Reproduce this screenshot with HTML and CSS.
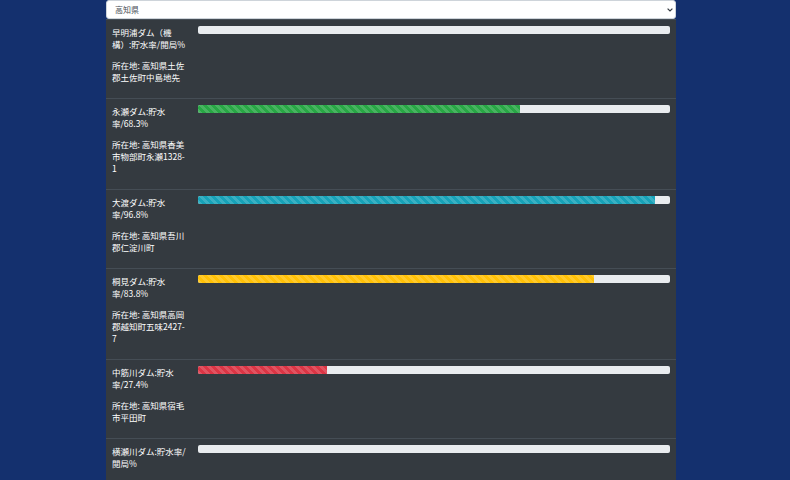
FILE: index.html
```html
<!DOCTYPE html>
<html lang="ja">
<head>
    <meta charset="UTF-8">
    <meta name="viewport" content="width=device-width, initial-scale=1.0">
    <title>高知県 ダム貯水率</title>
    <link rel="stylesheet" href="styles.css">
</head>
<body>
    <div class="container">
        <div class="select-wrap">
            <select class="pref-select">
                <option>高知県</option>
            </select>
            <svg class="select-arrow" width="6" height="4" viewBox="0 0 6 4">
                <path d="M0.6 0.6 L3 3 L5.4 0.6" fill="none" stroke="#343a40" stroke-width="1.2"/>
            </svg>
        </div>

        <table class="dam-table">
            <tbody>
                <tr>
                    <td class="dam-name">
                        <p>早明浦ダム（機構）:貯水率/閲局%</p>
                        <p>所在地: 高知県土佐郡土佐町中島地先</p>
                    </td>
                    <td class="dam-bar">
                        <div class="progress"></div>
                    </td>
                </tr>
                <tr>
                    <td class="dam-name">
                        <p>永瀬ダム:貯水率/68.3%</p>
                        <p>所在地: 高知県香美市物部町永瀬1328-1</p>
                    </td>
                    <td class="dam-bar">
                        <div class="progress"><div class="progress-bar success" style="width: 68.3%"></div></div>
                    </td>
                </tr>
                <tr>
                    <td class="dam-name">
                        <p>大渡ダム:貯水率/96.8%</p>
                        <p>所在地: 高知県吾川郡仁淀川町</p>
                    </td>
                    <td class="dam-bar">
                        <div class="progress"><div class="progress-bar info" style="width: 96.8%"></div></div>
                    </td>
                </tr>
                <tr>
                    <td class="dam-name">
                        <p>桐見ダム:貯水率/83.8%</p>
                        <p>所在地: 高知県高岡郡越知町五味2427-7</p>
                    </td>
                    <td class="dam-bar">
                        <div class="progress"><div class="progress-bar warning" style="width: 83.8%"></div></div>
                    </td>
                </tr>
                <tr>
                    <td class="dam-name">
                        <p>中筋川ダム:貯水率/27.4%</p>
                        <p>所在地: 高知県宿毛市平田町</p>
                    </td>
                    <td class="dam-bar">
                        <div class="progress"><div class="progress-bar danger" style="width: 27.4%"></div></div>
                    </td>
                </tr>
                <tr>
                    <td class="dam-name">
                        <p>横瀬川ダム:貯水率/閲局%</p>
                        <p>所在地: 高知県宿毛市山北</p>
                    </td>
                    <td class="dam-bar">
                        <div class="progress"></div>
                    </td>
                </tr>
            </tbody>
        </table>
    </div>
</body>
</html>
```

FILE: styles.css
```css
body {
    background-color: #14306e;
    margin: 0;
    font-family: "Noto Sans CJK JP", "Noto Sans", sans-serif;
    font-size: 8.5px;
    line-height: 12px;
    color: #ffffff;
}
.container {
    width: 570px;
    margin-left: 106px;
}
.select-wrap {
    position: relative;
}
.pref-select {
    display: block;
    width: 100%;
    height: 19px;
    padding: 0 16px 0 8px;
    margin: 0;
    font-family: inherit;
    font-size: 8px;
    color: #495057;
    background-color: #ffffff;
    border: 1px solid #ced4da;
    border-radius: 3px;
    appearance: none;
    -webkit-appearance: none;
    outline: none;
}
.select-arrow {
    position: absolute;
    right: 3px;
    top: 8px;
}
.dam-table {
    width: 100%;
    border-collapse: collapse;
    background-color: #343a40;
}
.dam-table td {
    border-top: 1px solid #454d55;
    padding: 6px;
    vertical-align: top;
}
.dam-name {
    width: 74px;
}
.dam-name p {
    margin: 0 0 9px 0;
}
.progress {
    display: flex;
    height: 8px;
    overflow: hidden;
    background-color: #e9ecef;
    border-radius: 2px;
}
.progress-bar {
    height: 100%;
    background-image: linear-gradient(45deg, rgba(255, 255, 255, .15) 25%, transparent 25%, transparent 50%, rgba(255, 255, 255, .15) 50%, rgba(255, 255, 255, .15) 75%, transparent 75%, transparent);
    background-size: 8px 8px;
}
.progress-bar.success {
    background-color: #28a745;
}
.progress-bar.info {
    background-color: #17a2b8;
}
.progress-bar.warning {
    background-color: #ffc107;
}
.progress-bar.danger {
    background-color: #dc3545;
}
```
